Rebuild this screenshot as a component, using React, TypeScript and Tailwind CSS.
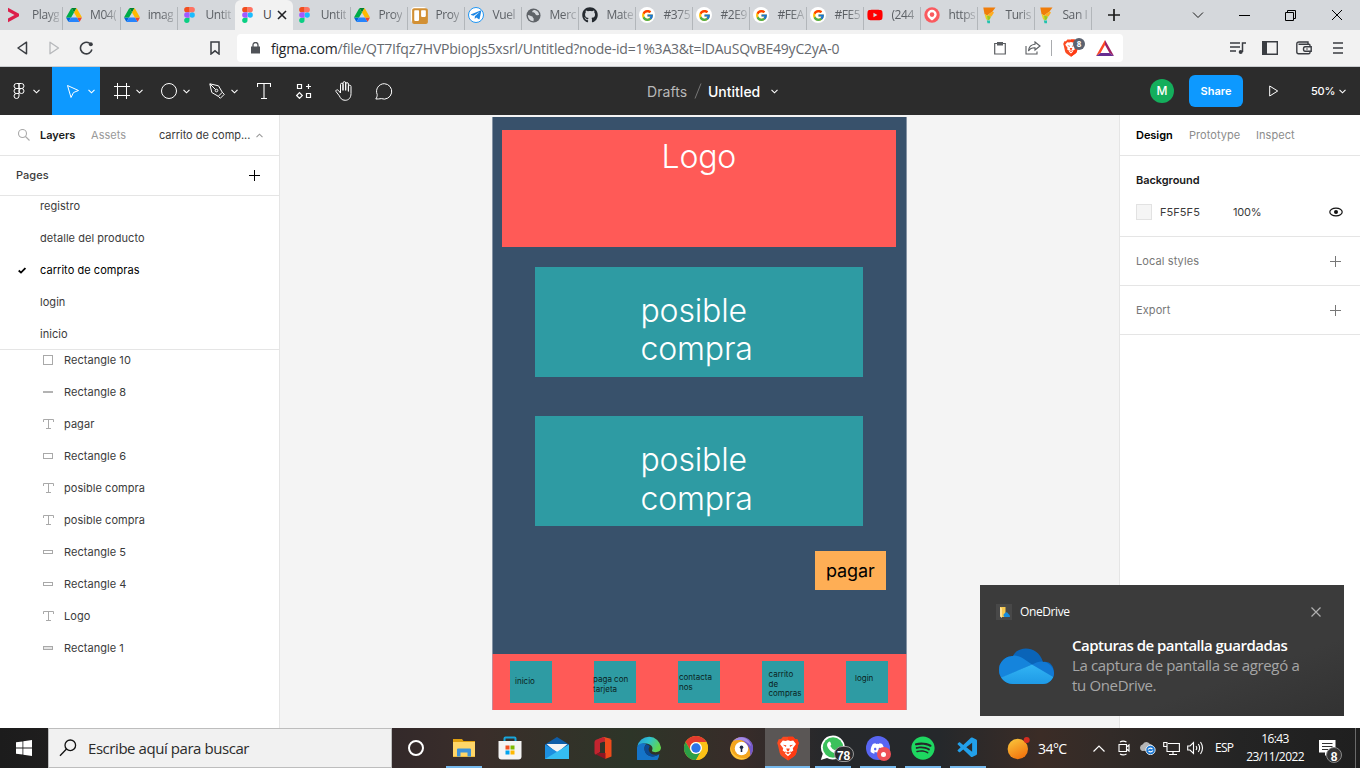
import React from "react";
import { FcGoogle } from "react-icons/fc";
import { FaGithub, FaTrello, FaYoutube, FaSpotify, FaDiscord, FaTelegramPlane } from "react-icons/fa";
import { VscVscode } from "react-icons/vsc";

const SEGOE = "font-['Open_Sans','Noto_Sans',sans-serif]";

/* ---------- favicons ---------- */

const DriveIcon = () => (
  <svg width="16" height="14" viewBox="0 0 87.3 78">
    <path d="m6.6 66.85 3.85 6.65c.8 1.4 1.95 2.5 3.3 3.3l13.75-23.8h-27.5c0 1.55.4 3.1 1.2 4.5z" fill="#0066da" />
    <path d="m43.65 25-13.75-23.8c-1.35.8-2.5 1.9-3.3 3.3l-25.4 44a9.06 9.06 0 0 0 -1.2 4.5h27.5z" fill="#00ac47" />
    <path d="m73.55 76.8c1.35-.8 2.5-1.9 3.3-3.3l1.6-2.75 7.65-13.25c.8-1.4 1.2-2.95 1.2-4.5h-27.5l5.85 11.5z" fill="#ea4335" />
    <path d="m43.65 25 13.75-23.8c-1.35-.8-2.9-1.2-4.5-1.2h-18.5c-1.6 0-3.15.45-4.5 1.2z" fill="#00832d" />
    <path d="m59.8 53h-32.3l-13.75 23.8c1.35.8 2.9 1.2 4.5 1.2h50.8c1.6 0 3.15-.45 4.5-1.2z" fill="#2684fc" />
    <path d="m73.4 26.5-12.7-22c-.8-1.4-1.95-2.5-3.3-3.3l-13.75 23.8 16.15 28h27.45c0-1.55-.4-3.1-1.2-4.5z" fill="#ffba00" />
  </svg>
);

const FigmaIcon = () => (
  <svg width="11" height="16" viewBox="0 0 38 57">
    <path d="M19 28.5a9.5 9.5 0 1 1 19 0 9.5 9.5 0 0 1-19 0z" fill="#1abcfe" />
    <path d="M0 47.5A9.5 9.5 0 0 1 9.5 38H19v9.5a9.5 9.5 0 1 1-19 0z" fill="#0acf83" />
    <path d="M19 0v19h9.5a9.5 9.5 0 1 0 0-19H19z" fill="#ff7262" />
    <path d="M0 9.5A9.5 9.5 0 0 0 9.5 19H19V0H9.5A9.5 9.5 0 0 0 0 9.5z" fill="#f24e1e" />
    <path d="M0 28.5A9.5 9.5 0 0 0 9.5 38H19V19H9.5A9.5 9.5 0 0 0 0 28.5z" fill="#a259ff" />
  </svg>
);

const ArrowFavicon = () => (
  <svg width="13" height="16" viewBox="0 0 13 16">
    <path d="M1 .7 12 6.700V9.300L1 15.300V11.500L7.500 8 1 4.500Z" fill="#dc1f4b" />
  </svg>
);

const TrelloIcon = () => (
  <span className="grid size-4 place-items-center rounded-sm bg-white">
    <FaTrello className="size-[18px] shrink-0 text-[#d29034]" />
  </span>
);

const PlaneIcon = () => (
  <span className="grid size-4 place-items-center rounded-full border border-[#2196f3] bg-white">
    <FaTelegramPlane className="size-[12px] text-[#1e88e5]" />
  </span>
);

const GlobeIcon = () => (
  <svg width="15" height="15" viewBox="0 0 16 16">
    <circle cx="8" cy="8" r="7.5" fill="#5f6368" />
    <path d="M2 7.5c2 .2 2.5 1 4 1.200 1.500.1 1 1.500 1.800 2 .8.500.2 2.500.2 3.500C4.500 14 2 11.500 2 7.500zM8.500 2c-1.500.5-2.500 1.500-1.500 2.500s2.500 0 2.800 1.500c.2 1.200 1.700 2 4.200 1.500C14 4.500 11.500 2 8.500 2z" fill="#d5d8dc" />
  </svg>
);

const GoogleIcon = () => (
  <span className="grid size-4 place-items-center rounded-full bg-white">
    <FcGoogle className="size-[13px]" />
  </span>
);

const AirIcon = () => (
  <svg width="16" height="16" viewBox="0 0 16 16">
    <circle cx="8" cy="8" r="7.700" fill="#fa5a5f" />
    <path d="M8 2.800a4.700 4.700 0 0 1 4.700 4.700c0 2.800-2.400 4.200-4.700 6-2.300-1.800-4.700-3.200-4.700-6A4.700 4.700 0 0 1 8 2.800z" fill="#fff" />
    <circle cx="8" cy="7.600" r="2.300" fill="#fa5a5f" />
  </svg>
);

const TurismoIcon = () => (
  <svg width="13" height="17" viewBox="0 0 13 17">
    <path d="M.3.500H12.500L9.500 4.500 4 8.500 1.500 7Z" fill="#f07d0a" />
    <path d="M9.500 4.500 11 5.500 8.500 9.500 4 8.500Z" fill="#ffad1f" />
    <path d="M1.500 7 4 8.500 4.500 13.500 3 12Z" fill="#e9d21c" />
    <path d="M4 8.500 8 9.500 6.800 12.500 4.500 13.500Z" fill="#9fc91b" />
    <path d="M3.800 13.500H7V16.300H4.500Z" fill="#21c3ae" />
  </svg>
);

const BraveIcon = ({ w, h }: { w: number; h: number }) => (
  <svg width={w} height={h} viewBox="0 0 22 25">
    <path d="M6 .8H16L18 3 20.300 3.200 21.800 7 21 9.500 19.300 17Q18.700 19.200 16.800 20.500L11 24.500 5.200 20.500Q3.300 19.200 2.700 17L1 9.500.2 7 1.700 3.200 4 3Z" fill="#fb4a20" />
    <path d="M11 .8H16L18 3 20.300 3.200 21.800 7 21 9.500 19.300 17Q18.700 19.200 16.800 20.500L11 24.500Z" fill="#ff3a12" />
    <path d="M5.800 4.500 8.500 5 11 4.300 13.500 5 16.200 4.500 19 8 15.800 12.300 16.300 14.500 14.200 16 12.700 15.200 14 17.500 11 20.300 8 17.500 9.300 15.200 7.800 16 5.700 14.500 6.200 12.300 3 8Z" fill="#fff" />
    <path d="M5.800 8.700 9.300 9.300 9 11ZM16.200 8.700 12.700 9.300 13 11ZM9.200 12.500H12.800L12 14.800 11 15.500 10 14.800ZM8.800 16.800 11 15.800 13.200 16.800 11 18.200Z" fill="#fb4a20" />
  </svg>
);

/* ---------- browser chrome ---------- */

const tabs: { icon: React.ReactNode; label: string; wide?: boolean }[] = [
  { icon: <DriveIcon />, label: "M04(", wide: true },
  { icon: <DriveIcon />, label: "imag", wide: true },
  { icon: <FigmaIcon />, label: "Untit", wide: true },
  { icon: <FigmaIcon />, label: "U", wide: true },
  { icon: <FigmaIcon />, label: "Untit", wide: true },
  { icon: <DriveIcon />, label: "Proy" },
  { icon: <TrelloIcon />, label: "Proy" },
  { icon: <PlaneIcon />, label: "Vuel" },
  { icon: <GlobeIcon />, label: "Merc" },
  { icon: <FaGithub className="size-4 text-[#24292f]" />, label: "Mate" },
  { icon: <GoogleIcon />, label: "#375" },
  { icon: <GoogleIcon />, label: "#2E9" },
  { icon: <GoogleIcon />, label: "#FEA" },
  { icon: <GoogleIcon />, label: "#FE5" },
  { icon: <FaYoutube className="h-4 w-4 text-[#f00]" />, label: "(244" },
  { icon: <AirIcon />, label: "https" },
  { icon: <TurismoIcon />, label: "Turis" },
  { icon: <TurismoIcon />, label: "San I" },
];

const fade = "[mask-image:linear-gradient(to_right,black_14px,transparent_32px)]";

function TabStrip() {
  return (
    <div className={`flex h-[30px] items-stretch bg-[#d5d8dc] text-[12px] tracking-[-0.400px] text-[#5c6065] ${SEGOE}`}>
      <div className="flex w-[62px] items-center pl-[7px]">
        <ArrowFavicon />
        <span className={`ml-3 whitespace-nowrap ${fade}`}>Playg</span>
      </div>
      {tabs.map((t, i) =>
        i === 3 ? (
          <div key={i} className="flex w-[57.700px] items-center rounded-t-md bg-[#f2f2f2] pl-[2px]">
            <span className="grid w-5 place-items-center">{t.icon}</span>
            <span className="ml-[6px] w-[9px] text-[#3c4043]">{t.label}</span>
            <svg width="10" height="10" viewBox="0 0 10 10" className="ml-[5px] shrink-0" stroke="#202124" strokeWidth="1.600">
              <path d="M1 1 9 9M9 1 1 9" />
            </svg>
          </div>
        ) : (
          <div key={i} className={`flex items-center ${t.wide ? "w-[57.700px]" : "w-[57px]"}`}>
            <span className={`mt-[7px] h-[23px] w-px ${i === 4 ? "" : "bg-[#b2b6ba]"}`} />
            <span className="ml-px grid w-5 place-items-center">{t.icon}</span>
            <span className={`ml-[6px] whitespace-nowrap ${fade}`}>{t.label}</span>
          </div>
        )
      )}
      <span className="mt-[7px] w-px bg-[#b2b6ba]" />
      <div className="flex grow items-center text-[#1b1b1b]">
        <svg width="12" height="12" viewBox="0 0 12 12" className="ml-4" stroke="currentColor" strokeWidth="1.700">
          <path d="M6 0V12M0 6H12" />
        </svg>
        <svg width="12" height="8" viewBox="0 0 12 8" className="ml-[72px]" fill="none" stroke="currentColor">
          <path d="M1 1.500 6 6.500 11 1.500" />
        </svg>
        <span className="ml-[35px] h-px w-[11px] bg-black" />
        <svg width="11" height="11" viewBox="0 0 11 11" className="ml-[35px]" fill="none" stroke="#000">
          <path d="M.5 2.500H8.500V10.500H.5ZM2.500 2.500V.5H10.500V8.500H8.500" />
        </svg>
        <svg width="12" height="12" viewBox="0 0 12 12" className="ml-[35px]" stroke="#000">
          <path d="M1 1 11 11M11 1 1 11" />
        </svg>
      </div>
    </div>
  );
}

function AddressBar() {
  return (
    <div className={`flex h-[37px] items-center border-b border-[#c9cccf] bg-[#f2f2f2] text-[#3a3d42] ${SEGOE}`}>
      <svg width="11" height="14" viewBox="0 0 11 14" className="ml-[17px]" fill="none" stroke="currentColor" strokeWidth="1.500" strokeLinejoin="round">
        <path d="M9.500 1.200V12.800L1 7Z" />
      </svg>
      <svg width="11" height="14" viewBox="0 0 11 14" className="ml-[21px]" fill="none" stroke="#b6b8bb" strokeWidth="1.300" strokeLinejoin="round">
        <path d="M1 1.200V12.800L9.500 7Z" />
      </svg>
      <svg width="15" height="14" viewBox="0 0 15 14" className="ml-[19px]" fill="none" stroke="currentColor" strokeWidth="1.600">
        <path d="M10.500 2.200A5.800 5.800 0 1 0 12.900 8.500" />
        <circle cx="11.800" cy="3.200" r="2" fill="currentColor" stroke="none" />
      </svg>
      <svg width="10" height="14" viewBox="0 0 10 14" className="ml-[116px]" fill="none" stroke="currentColor" strokeWidth="1.500">
        <path d="M1 1H9V13L5 9.800 1 13Z" />
      </svg>
      <div className="ml-[17px] flex h-7 w-[886px] items-center rounded bg-white">
        <svg width="9" height="12" viewBox="0 0 9 12" className="ml-[14px]" fill="#4f5257">
          <path d="M0 4.500H9V11.500H0Z" />
          <path d="M2 5V3A2.500 2.500 0 0 1 7 3V5" fill="none" stroke="#4f5257" strokeWidth="1.300" />
        </svg>
        <span className="ml-[11px] w-[720px] whitespace-nowrap text-[14px] tracking-[-0.210px] text-[#66696e]">
          <span className="text-[#222427]">figma.com</span>/file/QT7Ifqz7HVPbiopJs5xsrl/Untitled?node-id=1%3A3&amp;t=lDAuSQvBE49yC2yA-0
        </span>
        <svg width="12" height="14" viewBox="0 0 12 14" className="ml-[3px] shrink-0" fill="none" stroke="#5a5d61" strokeWidth="1.200">
          <path d="M.7 2.500H11.300V13H.7Z" />
          <path d="M3 1H9V4.500H3Z" fill="#5a5d61" stroke="none" />
        </svg>
        <svg width="16" height="14" viewBox="0 0 16 14" className="ml-[19px] shrink-0" fill="none" stroke="#5a5d61" strokeWidth="1.100">
          <path d="M1 5V13H12V10.500M10 1 15 5 10 9V6.800C7 6.700 5 7.500 3.500 10 3.800 6 6 3.600 10 3.300Z" />
        </svg>
        <span className="ml-[10px] h-4 w-px shrink-0 bg-[#a9abae]" />
        <span className="relative ml-[11px] shrink-0">
          <BraveIcon w={16} h={18} />
          <span className="absolute -top-[1px] left-[10px] grid size-3 place-items-center rounded-full bg-[#5c6370] text-[8px] font-bold text-white">8</span>
        </span>
        <svg width="18" height="16" viewBox="0 0 18 16" className="ml-[17px] shrink-0">
          <path d="M9 0 0 16 4.500 13 9 5Z" fill="#ff4724" />
          <path d="M9 0 18 16 13.500 13 9 5Z" fill="#9e1f63" />
          <path d="M0 16H18L13.500 13H4.500Z" fill="#662d91" />
        </svg>
      </div>
      <svg width="16" height="14" viewBox="0 0 16 14" className="ml-[107px]" fill="none" stroke="currentColor" strokeWidth="1.500">
        <path d="M0 2H10M0 6H10M0 10H6M12.500 11V2H16" />
        <circle cx="10.700" cy="11" r="2" fill="currentColor" stroke="none" />
      </svg>
      <svg width="16" height="14" viewBox="0 0 16 14" className="ml-[16px]" fill="none" stroke="currentColor" strokeWidth="1.400">
        <path d="M.7.700H15.300V13.300H.7Z" />
        <path d="M1 1H5V13H1Z" fill="currentColor" stroke="none" />
      </svg>
      <svg width="16" height="14" viewBox="0 0 16 14" className="ml-[18px]" fill="none" stroke="currentColor" strokeWidth="1.400">
        <path d="M2.500 3.200H13Q14 3.200 14 4.500V5.700M14 10.300V11.500Q14 12.800 12.500 12.800H2.500Q.8 12.800.8 11V3Q.8 1 3 1H12V3M9 5.700H15.200V10.300H9Q7.500 10.300 7.500 8T9 5.700" />
        <circle cx="11" cy="8" r=".8" fill="currentColor" stroke="none" />
      </svg>
      <svg width="10" height="14" viewBox="0 0 10 14" className="ml-[21px]" stroke="currentColor" strokeWidth="1.500">
        <path d="M0 2H10M0 7H10M0 12H10" />
      </svg>
    </div>
  );
}

/* ---------- Figma toolbar ---------- */

const Chevron = ({ className = "" }: { className?: string }) => (
  <svg width="7" height="5" viewBox="0 0 7 5" className={`shrink-0 ${className}`} fill="none" stroke="currentColor" strokeWidth="1.100">
    <path d="M.5.800 3.500 3.800 6.500.800" />
  </svg>
);

function Toolbar() {
  return (
    <div className="flex h-12 shrink-0 items-stretch bg-[#2c2c2c] text-white">
      <div className="flex w-[647px] items-stretch">
        <div className="flex w-[52px] items-center pl-[13px]">
          <svg width="12" height="16" viewBox="0 0 12 16" fill="none" stroke="currentColor">
            <path d="M6 .5H3.500a2.500 2.500 0 0 0 0 5H6ZM6 .5H8.500a2.500 2.500 0 0 1 0 5H6ZM6 5.500H3.500a2.500 2.500 0 0 0 0 5H6ZM6 10.500H3.500A2.500 2.500 0 1 0 6 13Z" />
            <circle cx="8.500" cy="8" r="2.500" />
          </svg>
          <Chevron className="ml-[8px]" />
        </div>
        <div className="flex w-12 items-center bg-[#0d99ff] pl-[14px]">
          <svg width="14" height="15" viewBox="0 0 14 15" fill="none" stroke="currentColor" strokeLinejoin="round">
            <path d="M1.500 1.500 12.500 6.500 7.500 8.500 5 13.500Z" />
          </svg>
          <Chevron className="ml-[8px]" />
        </div>
        <div className="flex w-12 items-center pl-[14px]">
          <svg width="16" height="16" viewBox="0 0 16 16" stroke="currentColor">
            <path d="M3.500 0V16M12.500 0V16M0 3.500H16M0 12.500H16" />
          </svg>
          <Chevron className="ml-[6px]" />
        </div>
        <div className="flex w-12 items-center pl-[13px]">
          <svg width="16" height="16" viewBox="0 0 16 16" fill="none" stroke="currentColor">
            <circle cx="8" cy="8" r="7.500" />
          </svg>
          <Chevron className="ml-[6px]" />
        </div>
        <div className="flex w-12 items-center pl-[13px]">
          <svg width="16" height="16" viewBox="0 0 16 16" fill="none" stroke="currentColor">
            <path d="M.8.800 9.500 2.800 13.300 9.300 9.300 13.300 2.800 9.500ZM13.300 9.300 15.300 11.300 11.300 15.300 9.300 13.300M1 1 6.500 6.500" />
            <circle cx="7.500" cy="7.500" r="1.300" />
          </svg>
          <Chevron className="ml-[6px]" />
        </div>
        <div className="grid w-[38px] place-items-center pl-px">
          <svg width="14" height="16" viewBox="0 0 14 16" fill="none" stroke="currentColor">
            <path d="M.5 4V.500H13.500V4M7 .5V15.500M4 15.500H10" strokeWidth="1.100" />
          </svg>
        </div>
        <div className="grid w-[43px] place-items-center pl-px">
          <svg width="16" height="16" viewBox="0 0 16 16" fill="none" stroke="currentColor" strokeWidth="1.200">
            <path d="M1.500 1.500H5.500V5.500H1.500ZM10.500 10.500H14.500V14.500H10.500ZM3.500 9.700 6.300 12.500 3.500 15.300.7 12.500ZM12.500 1V6M10 3.500H15" />
          </svg>
        </div>
        <div className="grid w-[38px] place-items-center">
          <svg width="18" height="20" viewBox="0 0 18 20" fill="none" stroke="currentColor" strokeLinecap="round" strokeLinejoin="round">
            <path d="M5.500 10V3.500a1.250 1.250 0 0 1 2.500 0V9M8 9V2a1.250 1.250 0 0 1 2.700 0V9M10.700 9V3a1.250 1.250 0 0 1 2.700 0V10M13.400 10V5.500a1.250 1.250 0 0 1 2.600 0V12.500C16 17 13.500 19.300 10.200 19.300 6.500 19.300 5.500 17 4.300 14.800L1 10.500C.5 9 2.200 8.200 3.300 9.300L5.500 12V10" />
          </svg>
        </div>
        <div className="grid w-10 place-items-center pl-px">
          <svg width="18" height="17" viewBox="0 0 18 17" fill="none" stroke="currentColor" strokeLinejoin="round">
            <path d="M9.300.700a7.700 7.700 0 1 1-3 14.900C4.500 16 2.500 16 .8 16 1.800 14.500 2.300 13 2.200 11.500A7.700 7.700 0 0 1 9.300.700Z" />
          </svg>
        </div>
      </div>
      <div className="flex items-center text-[14px]">
        <span className="w-[40px] tracking-[0.050px] text-[#b8b8b8]">Drafts</span>
        <svg width="8" height="16" viewBox="0 0 8 16" className="mr-[6px] ml-[7px]" stroke="#777">
          <path d="M1 15.500 7 .5" />
        </svg>
        <span className="w-[53px] font-medium">Untitled</span>
        <Chevron className="ml-[10px]" />
      </div>
      <div className="flex flex-1 items-center justify-end pr-[14px] text-[11px] font-medium">
        <span className="grid size-6 place-items-center rounded-full bg-[#14ae5c] text-[12px]">M</span>
        <span className="ml-[15px] grid h-8 w-[54px] place-items-center rounded-md bg-[#0d99ff] font-semibold">Share</span>
        <svg width="10" height="12" viewBox="0 0 10 12" className="ml-[26px]" fill="none" stroke="currentColor" strokeLinejoin="round">
          <path d="M.7 1V11L8.700 6Z" />
        </svg>
        <span className="ml-[32px] w-[23px] tracking-[-0.200px]">50%</span>
        <Chevron className="ml-[5px]" />
      </div>
    </div>
  );
}

/* ---------- left panel ---------- */

const pages = ["registro", "detalle del producto", "carrito de compras", "login", "inicio"];

type Shape = "square" | "line" | "text" | "rect" | "thin" | "filled";
const layers: [Shape, string][] = [
  ["square", "Rectangle 10"],
  ["line", "Rectangle 8"],
  ["text", "pagar"],
  ["rect", "Rectangle 6"],
  ["text", "posible compra"],
  ["text", "posible compra"],
  ["thin", "Rectangle 5"],
  ["thin", "Rectangle 4"],
  ["text", "Logo"],
  ["filled", "Rectangle 1"],
];

function LayerIcon({ shape }: { shape: Shape }) {
  if (shape === "text")
    return (
      <svg width="11" height="10" viewBox="0 0 11 10" fill="none" stroke="#a9a9a9">
        <path d="M.5 3V.500H10.500V3M5.500.500V9.500M3 9.500H8" />
      </svg>
    );
  if (shape === "line") return <span className="h-[2px] w-[10px] bg-[#b3b3b3]" />;
  if (shape === "square") return <span className="size-[10px] border border-[#a9a9a9]" />;
  if (shape === "rect") return <span className="h-[6px] w-[10px] border border-[#a9a9a9]" />;
  if (shape === "thin") return <span className="h-[4px] w-[10px] border border-[#a9a9a9]" />;
  return <span className="h-[4px] w-[10px] border border-[#a9a9a9] bg-[#e5e5e5]" />;
}

const Plus = ({ color }: { color: string }) => (
  <svg width="11" height="11" viewBox="0 0 11 11" stroke={color}>
    <path d="M5.500 0V11M0 5.500H11" />
  </svg>
);

function LeftPanel() {
  return (
    <aside className="flex w-[280px] shrink-0 flex-col border-r border-[#e5e5e5] bg-white text-[11px] tracking-[0.050px] text-[#3b3b3b]">
      <div className="flex h-[41px] shrink-0 items-center border-b border-[#e5e5e5]">
        <svg width="12" height="12" viewBox="0 0 12 12" className="ml-[18px]" fill="none" stroke="#aaa" strokeWidth="1.100">
          <circle cx="4.500" cy="4.500" r="4" />
          <path d="M7.500 7.500 11.500 11.500" />
        </svg>
        <span className="ml-[10px] w-[51px] font-semibold tracking-[-0.050px] text-[#1a1a1a]">Layers</span>
        <span className="w-[68px] text-[#999]">Assets</span>
        <span className="w-[91px] whitespace-nowrap tracking-[-0.040px]">carrito de comp...</span>
        <Chevron className="ml-[6px] rotate-180 text-[#999]" />
      </div>
      <div className="flex h-10 shrink-0 items-center justify-between border-b border-[#e5e5e5] pr-[19px] pl-4">
        <span className="font-medium">Pages</span>
        <Plus color="#000" />
      </div>
      <div className="h-[154px] shrink-0 overflow-hidden border-b border-[#e5e5e5]">
        <div className="-mt-1.5">
          {pages.map((p, i) => (
            <div key={p} className="flex h-8 items-center">
              <span className="w-10 pl-[18px]">
                {i === 2 && (
                  <svg width="8" height="7" viewBox="0 0 8 7" fill="none" stroke="#000" strokeWidth="1.800">
                    <path d="M.7 3.500 3 5.600 7.400 1" />
                  </svg>
                )}
              </span>
              <span className={i === 2 ? "text-black" : ""}>{p}</span>
            </div>
          ))}
        </div>
      </div>
      <div className="overflow-hidden">
        <div className="-mt-1.5">
          {layers.map(([shape, name], i) => (
            <div key={i} className="flex h-8 items-center pl-[42px]">
              <span className="grid w-3 place-items-center">
                <LayerIcon shape={shape} />
              </span>
              <span className="ml-[10px]">{name}</span>
            </div>
          ))}
        </div>
      </div>
    </aside>
  );
}

/* ---------- canvas ---------- */

function Canvas() {
  const box = "absolute bg-[#2e9ba3]";
  const nav = "absolute top-[7px] h-[42px] w-[42px] bg-[#2e9ba3] text-[8px] leading-[9.500px] text-[#0b1f21]";
  const label = "absolute whitespace-pre";
  const title = "text-[32px] leading-[38.500px] font-[360] tracking-[-0.150px]";
  return (
    <main className="relative grow overflow-hidden bg-[#f4f4f4]">
      <div className="absolute top-[2px] left-[212px] h-[593px] w-[415px] border-x border-[#8593a4] bg-[#38516b] text-white">
        <div className="absolute top-[13px] left-[9px] h-[117px] w-[394px] bg-[#ff5a57]">
          <span className={`${label} ${title} top-[8px] left-[159.500px]`}>Logo</span>
        </div>
        <div className={`${box} top-[150px] left-[42px] h-[110px] w-[328px]`}>
          <span className={`${label} ${title} top-[24.500px] left-[105.500px]`}>{"posible\ncompra"}</span>
        </div>
        <div className={`${box} top-[299px] left-[42px] h-[110px] w-[328px]`}>
          <span className={`${label} ${title} top-[25px] left-[105.500px]`}>{"posible\ncompra"}</span>
        </div>
        <div className="absolute top-[434px] left-[322px] h-[39px] w-[71px] bg-[#feae55] text-black">
          <span className="absolute top-[9px] left-[11px] text-[18px] leading-[22px] tracking-[-0.100px]">pagar</span>
        </div>
        <div className="absolute top-[537px] -left-px h-14 w-[415px] border-x border-[#c98a94] bg-[#ff5a57]">
          <div className={`${nav} left-[17px]`}><span className={`${label} top-[16px] left-[5px]`}>inicio</span></div>
          <div className={`${nav} left-[101px]`}><span className={`${label} top-[14px] left-[-1px]`}>{"paga con\ntarjeta"}</span></div>
          <div className={`${nav} left-[185px]`}><span className={`${label} top-[12px] left-[1px]`}>{"contacta\nnos"}</span></div>
          <div className={`${nav} left-[269px]`}><span className={`${label} top-[9px] left-[6.500px]`}>{"carrito\nde\ncompras"}</span></div>
          <div className={`${nav} left-[353px]`}><span className={`${label} top-[13px] left-[9px]`}>login</span></div>
        </div>
      </div>
    </main>
  );
}

/* ---------- right panel ---------- */

function RightPanel() {
  return (
    <aside className="w-[241px] shrink-0 border-l border-[#e5e5e5] bg-white text-[11px] tracking-[0.055px] text-[#3b3b3b]">
      <div className="flex h-[41px] items-center border-b border-[#e5e5e5] pl-4 text-[#8c8c8c]">
        <span className="w-[52px] font-semibold tracking-[-0.050px] text-black">Design</span>
        <span className="w-[68px] pl-px">Prototype</span>
        <span>Inspect</span>
      </div>
      <div className="h-[81px] border-b border-[#e5e5e5] px-4 pt-2">
        <div className="flex h-8 items-center font-semibold tracking-[-0.050px] text-[#1a1a1a]">Background</div>
        <div className="flex h-8 items-center">
          <span className="size-4 border border-[#e2e2e2] bg-[#f5f5f5]" />
          <span className="ml-2 w-[73px]">F5F5F5</span>
          <span className="tracking-[-0.200px]">100%</span>
          <svg width="14" height="10" viewBox="0 0 14 10" className="mr-px ml-auto" fill="none" stroke="#111" strokeWidth="1.200">
            <ellipse cx="7" cy="5" rx="6.200" ry="3.900" />
            <circle cx="7" cy="5" r="2" fill="#111" stroke="none" />
          </svg>
        </div>
      </div>
      {["Local styles", "Export"].map((s) => (
        <div key={s} className="flex h-[49px] items-center justify-between border-b border-[#e5e5e5] pr-[19px] pl-4 text-[#777]">
          <span className="tracking-[0.100px]">{s}</span>
          <Plus color="#777" />
        </div>
      ))}
    </aside>
  );
}

/* ---------- notification ---------- */

const Cloud = () => (
  <svg width="55" height="36" viewBox="0 0 55 36">
    <defs>
      <linearGradient id="cloudFront" x1="0" y1="0" x2="0" y2="1">
        <stop offset="0" stopColor="#32b4f4" />
        <stop offset="1" stopColor="#1f9ae6" />
      </linearGradient>
      <clipPath id="cloudClip">
        <path d="M14 36A14 14 0 0 1 14 8C18-2.500 39-3.500 44 14 51 13 55 18 55 25 55 31 50 36 44 36Z" />
      </clipPath>
    </defs>
    <g clipPath="url(#cloudClip)">
      <path d="M0 0H55V36H0Z" fill="#0a64b8" />
      <path d="M0 0 11 8.500C17 6 22 9 25 11L33 16.500 0 31Z" fill="#1584dc" />
      <path d="M33 16.500 38 14.200C47 11 55 18 55 25V31Z" fill="#1279d4" />
      <path d="M0 30.500 33 16.500 55 29.500V36H0Z" fill="url(#cloudFront)" />
    </g>
  </svg>
);

function Toast() {
  return (
    <div className={`absolute top-[585px] left-[980px] flex h-[131px] w-[364px] flex-col bg-linear-to-br from-[#3b3b3b] from-70% to-[#323232] text-white ${SEGOE}`}>
      <div className="mt-[19px] flex h-4 items-center pl-4">
        <span className="grid size-4 place-items-center bg-[#484848]">
          <svg width="11" height="12" viewBox="0 0 11 12">
            <path d="M1 1H6.500V11H3L1 9.500Z" fill="#f6c84f" />
            <path d="M1 1 3 2.500V12L1 10.500Z" fill="#ffe397" />
            <path d="M5.500 11A2 2 0 0 1 5.500 7.500Q8 5 9.500 8 11 8.500 11 11Z" fill="#168de0" />
          </svg>
        </span>
        <span className="ml-2 text-[12px] tracking-[-0.400px]">OneDrive</span>
        <svg width="10" height="10" viewBox="0 0 10 10" className="mr-[23px] ml-auto" stroke="#b0b0b0" strokeWidth="1.200">
          <path d="M.5.500 9.500 9.500M9.500.500.500 9.500" />
        </svg>
      </div>
      <div className="mt-[15px] flex">
        <div className="w-[74px] shrink-0 pt-[13px] pl-[19px]">
          <Cloud />
        </div>
        <div className="ml-[18px] text-[15px] leading-[20px] tracking-[-0.350px] whitespace-nowrap text-[#a6a6a6]">
          <div className="font-semibold tracking-[-0.520px] text-white">Capturas de pantalla guardadas</div>
          <div>La captura de pantalla se agregó a</div>
          <div>tu OneDrive.</div>
        </div>
      </div>
    </div>
  );
}

/* ---------- taskbar ---------- */

const Folder = () => (
  <svg width="22" height="20" viewBox="0 0 22 20">
    <path d="M0 1H9L10.500 3H22V19H0Z" fill="#e0a010" />
    <path d="M0 4H22V18.500H0Z" fill="#ffd668" />
    <path d="M4 18.500V11.500Q4 10.500 5 10.500H17Q18 10.500 18 11.500V18.500H14.500V14.500H7.500V18.500Z" fill="#3d92d9" />
  </svg>
);

const Store = () => (
  <svg width="24" height="24" viewBox="0 0 24 24">
    <path d="M6.500 6V2.500Q6.500 1.500 7.500 1.500H16.500Q17.500 1.500 17.500 2.500V6" fill="none" stroke="#18a6dc" strokeWidth="2" />
    <path d="M.5 5H23.500V20.500Q23.500 23.500 20.500 23.500H3.500Q.5 23.500.5 20.500Z" fill="#f4f4f4" />
    <path d="M7.500 9.500H11.500V13.500H7.500Z" fill="#f25022" />
    <path d="M12.500 9.500H16.500V13.500H12.500Z" fill="#7fba00" />
    <path d="M7.500 14.500H11.500V18.500H7.500Z" fill="#00a4ef" />
    <path d="M12.500 14.500H16.500V18.500H12.500Z" fill="#ffb900" />
  </svg>
);

const Mail = () => (
  <svg width="24" height="22" viewBox="0 0 24 22">
    <path d="M0 7.500 12 0 24 7.500V22H0Z" fill="#0f5ea8" />
    <path d="M1.500 7H22.500L12 16Z" fill="#f4f4f4" />
    <path d="M0 7.500 24 22H0Z" fill="#1c8fe0" />
    <path d="M24 7.500V22H0Z" fill="#35bdf2" />
  </svg>
);

const Office = () => (
  <svg width="18" height="22" viewBox="0 0 18 22">
    <path d="M10 0 5 2 10 4.500H12L17.500 2Z" fill="#e8502e" />
    <path d="M11 1 17.500 3V19.500L11 22Z" fill="#ee4b1b" />
    <path d="M.5 5Q.5 3.500 2 2.800L9.500 0 11 1.200V4.300L6 6V15L2 17.500Q.5 17.500.5 16Z" fill="#c3242f" />
    <path d="M2 17.500 4.500 16H11.500V22Z" fill="#8f1422" />
  </svg>
);

const Edge = () => (
  <svg width="24" height="24" viewBox="0 0 24 24">
    <defs>
      <linearGradient id="edgeTop" x1="0" y1="0" x2="1" y2=".4">
        <stop offset="0" stopColor="#2498d8" />
        <stop offset=".5" stopColor="#2fc1cf" />
        <stop offset="1" stopColor="#60d650" />
      </linearGradient>
    </defs>
    <path d="M.2 11A12 12 0 0 1 24 11.500C24 16 19 17 15.500 15.500 14.300 15 15.500 14 15.500 12.500 15.500 9 11.500 7.500 8 7.500 4 7.500 1 9.500.2 11Z" fill="url(#edgeTop)" />
    <path d="M.2 11C1.500 7 6 6.500 9.500 8 6.500 10 7 15 9.500 18 13 21.500 19 21 22.300 18A12 12 0 1 1 .2 11Z" fill="#1574c8" />
    <path d="M9.500 8.200C6.500 10.500 7.200 15.500 9.500 18 12.500 21.500 18.500 21 22 18 18 19.500 13 18.500 12 15 11 12 13 11 12.500 10 12 9 10.500 8.500 9.500 8.200Z" fill="#0b4a94" />
  </svg>
);

const Chrome = () => (
  <svg width="24" height="24" viewBox="0 0 24 24">
    <circle cx="12" cy="12" r="12" fill="#fbc116" />
    <path d="M1.600 6A12 12 0 0 1 22.400 6H12A6 6 0 0 0 6.800 15Z" fill="#e33b2e" />
    <path d="M1.600 6 6.800 15A6 6 0 0 0 12 18L17.200 15 12 24A12 12 0 0 1 1.600 6Z" fill="#2b9f47" />
    <path d="M22.400 6A12 12 0 0 1 12 24L17.200 15A6 6 0 0 0 17.200 9L12 6Z" fill="#fbc116" />
    <circle cx="12" cy="12" r="6" fill="#fff" />
    <circle cx="12" cy="12" r="4.700" fill="#2b75e8" />
  </svg>
);

const SecureBrowser = () => (
  <svg width="23" height="23" viewBox="0 0 23 23">
    <circle cx="11.500" cy="11.500" r="11.300" fill="#f4a51d" />
    <path d="M8 .7A11.300 11.300 0 0 1 20 19.200C21 12 18 6 8 .7Z" fill="#7459c9" />
    <path d="M3 4A11.300 11.300 0 0 1 12 .2C17 1 20 4 21 9 16 3 9 2 3 4Z" fill="#a58be5" />
    <path d="M.5 9C1 18 9 22 17 21A11.300 11.300 0 0 1 .5 9Z" fill="#ffc83d" />
    <circle cx="11.500" cy="11.500" r="6.700" fill="#fff" />
    <circle cx="11.500" cy="10.200" r="1.800" fill="#222a45" />
    <path d="M10.700 10.500H12.300V15H10.700Z" fill="#222a45" />
  </svg>
);

const WhatsApp = () => (
  <span className="relative">
    <svg width="26" height="26" viewBox="0 0 26 26">
      <path d="M13 .5A12 12 0 1 1 7 23L.8 25 2.800 18.800A12 12 0 0 1 13 .5Z" fill="#fff" />
      <circle cx="13" cy="12.500" r="10.200" fill="#3bc15b" />
      <path d="M8.500 7Q9.500 6.200 10.300 7L11.300 9.500 10.300 11Q11.800 14 15 15.300L16.500 13.900 19 15.200Q19.300 17.500 16.500 18.300C12 19 6 12.500 7.200 8.800Z" fill="#fff" />
    </svg>
    <span className="absolute top-[11px] left-[14px] grid h-4 w-5 place-items-center rounded-full border border-[#999] bg-[#2a2b2d] font-['Liberation_Sans',sans-serif] text-[12px] font-bold text-white">78</span>
  </span>
);

const Discord = () => (
  <span className="relative grid size-6 place-items-center rounded-full bg-[#5865f2]">
    <FaDiscord className="size-[15px] text-white" />
    <span className="absolute top-[11px] left-[11px] grid size-[14px] place-items-center rounded-full bg-[#ee4f56]">
      <span className="size-[5px] rounded-full bg-white" />
    </span>
  </span>
);

const apps: { icon: React.ReactNode; open?: boolean; active?: boolean }[] = [
  { icon: <Folder />, open: true },
  { icon: <Store /> },
  { icon: <Mail /> },
  { icon: <Office /> },
  { icon: <Edge /> },
  { icon: <Chrome /> },
  { icon: <SecureBrowser /> },
  { icon: <BraveIcon w={22} h={25} />, open: true, active: true },
  { icon: <WhatsApp />, open: true },
  { icon: <Discord />, open: true },
  { icon: <FaSpotify className="size-6 text-[#1ed760]" />, open: true },
  { icon: <VscVscode className="size-6 text-[#22a0ea]" />, open: true },
];

function Taskbar() {
  return (
    <div className={`flex h-10 shrink-0 items-stretch text-white ${SEGOE} [background-image:linear-gradient(to_right,#1c1c1c_0,#33292a_392px,#3a2e2a_480px,#2d3528_630px,#382c29_740px,#26282b_830px,#25282b_940px,#3b2c26_1040px,#322b28_1110px,#242424_1240px,#1f1f1f_1360px)]`}>
      <div className="grid w-12 place-items-center">
        <svg width="16" height="16" viewBox="0 0 16 16" fill="#fff">
          <path d="M0 2.300 6.500 1.400V7.600H0ZM7.300 1.300 16 0V7.600H7.300ZM0 8.400H6.500V14.600L0 13.700ZM7.300 8.400H16V16L7.300 14.700Z" />
        </svg>
      </div>
      <div className="flex w-[344px] items-center border border-[#bdbdbd] bg-[#f1f1f1] text-[15px] text-[#2b2b2b]">
        <svg width="18" height="18" viewBox="0 0 18 18" className="ml-[10px]" fill="none" stroke="#111" strokeWidth="1.300">
          <circle cx="11.300" cy="6.300" r="5.300" />
          <path d="M7.500 10 1 16.800" />
        </svg>
        <span className="ml-[11px] tracking-[-0.440px]">Escribe aquí para buscar</span>
      </div>
      <div className="grid w-[48px] place-items-center">
        <span className="size-4 rounded-full border-[2.500px] border-white" />
      </div>
      <div className="w-px" />
      {apps.map((a, i) => (
        <div key={i} className={`flex flex-col items-center ${i < 7 ? "w-[46.300px]" : "w-[45px]"} ${a.active ? "bg-[#5a5655]" : ""}`}>
          <span className="grid h-[38px] w-full place-items-center pt-[2px]">{a.icon}</span>
          {a.open && <span className={`h-[2px] bg-[#76b9ed] ${a.active ? "w-full" : "w-9"}`} />}
        </div>
      ))}
      <div className="flex items-center text-[14px]">
        <svg width="23" height="24" viewBox="0 0 23 24" className="ml-[17px]">
          <defs>
            <linearGradient id="sun" x1=".2" y1="0" x2=".7" y2="1">
              <stop offset="0" stopColor="#f9c33a" />
              <stop offset="1" stopColor="#f1710c" />
            </linearGradient>
          </defs>
          <circle cx="10.800" cy="13" r="10.200" fill="url(#sun)" />
          <circle cx="19.700" cy="4" r="3" fill="#d42c20" />
        </svg>
        <span className="ml-[8px] w-[55px] tracking-[-0.600px]">34°C</span>
        <svg width="12" height="7" viewBox="0 0 12 7" fill="none" stroke="#fff" strokeWidth="1.200">
          <path d="M.5 6.500 6 1 11.500 6.500" />
        </svg>
        <svg width="12" height="16" viewBox="0 0 12 16" className="ml-[13px]" fill="none" stroke="#fff" strokeWidth="1.100">
          <path d="M2 2Q5 .2 8.500 2M2 14Q5 15.800 8.500 14M1 4.500H8.500V11.500H1ZM8.500 7 11 5V11L8.500 9" />
        </svg>
        <svg width="17" height="14" viewBox="0 0 17 14" className="ml-[9px]">
          <path d="M3 10A3.500 3.500 0 0 1 3.500 3.500Q7-1 11 3 15 3.500 14 9.500Z" fill="#b5b5b5" />
          <circle cx="11.500" cy="9" r="4.700" fill="#1976d2" stroke="#fff" strokeWidth=".8" />
          <path d="M9 8.500Q11 6 13.500 8M14 9.500Q12 12 9.500 10" stroke="#fff" fill="none" strokeWidth="1.200" />
        </svg>
        <svg width="17" height="15" viewBox="0 0 17 15" className="ml-[7px]" fill="none" stroke="#fff" strokeWidth="1.100">
          <path d="M5 2.500H16.400V10.500H4V5.500M10 10.500V13.500M6 13.500H14M.7 1.500H4V5.500H.7Z" />
        </svg>
        <svg width="17" height="14" viewBox="0 0 17 14" className="ml-[7px]" fill="none" stroke="#fff" strokeWidth="1.100">
          <path d="M.7 5H3L6.500 1.500V12.500L3 9H.7ZM9 5Q10.500 7 9 9M11.300 3Q14 7 11.300 11M13.500 1Q17.500 7 13.500 13" />
        </svg>
        <span className="ml-[11px] w-[19px] text-[12px] tracking-[-0.800px]">ESP</span>
        <div className="ml-[11px] w-[60px] text-center text-[12px] leading-[18px] tracking-[-0.600px] whitespace-nowrap">
          <div>16:43</div>
          <div>23/11/2022</div>
        </div>
        <span className="relative ml-[14px]">
          <svg width="17" height="16" viewBox="0 0 17 16">
            <path d="M0 0H16.500V12.500H9.500L6 16V12.500H0Z" fill="#fff" />
            <path d="M3 3.500H13.500M3 6.500H13.500M3 9.500H9" stroke="#333" />
          </svg>
          <span className="absolute top-[7px] left-[7px] grid size-4 place-items-center rounded-full border border-[#8a8a8a] bg-[#333] font-['Liberation_Sans',sans-serif] text-[12px] font-bold">8</span>
        </span>
      </div>
      <span className="mr-1 ml-auto w-px bg-[#6a6a6a]" />
    </div>
  );
}

export default function App() {
  return (
    <div className="relative flex h-[768px] w-[1360px] flex-col overflow-hidden font-['Inter',sans-serif]">
      <TabStrip />
      <AddressBar />
      <Toolbar />
      <div className="flex min-h-0 grow">
        <LeftPanel />
        <Canvas />
        <RightPanel />
      </div>
      <Taskbar />
      <Toast />
    </div>
  );
}
